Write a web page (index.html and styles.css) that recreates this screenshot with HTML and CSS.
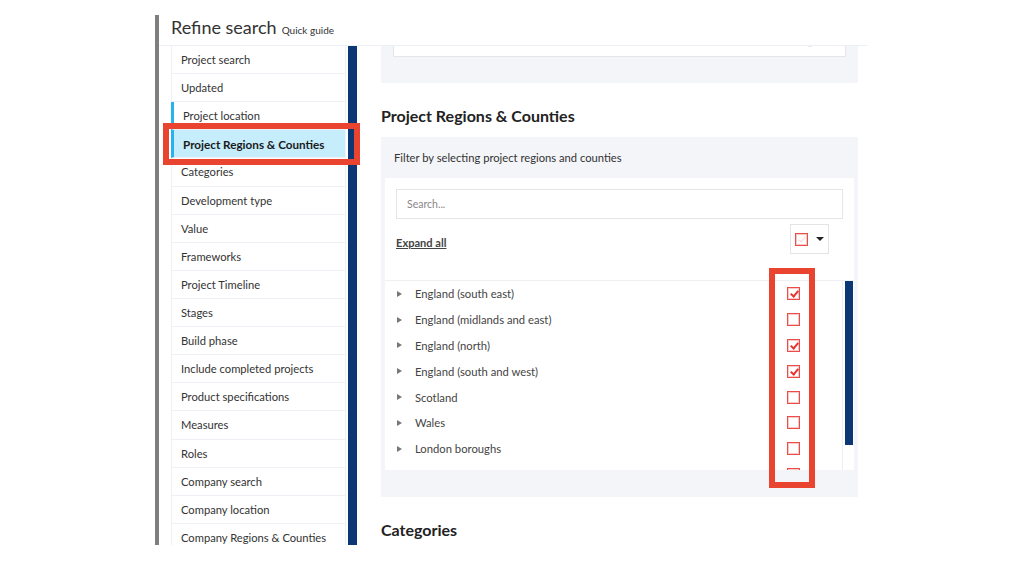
FILE: index.html
```html
<!DOCTYPE html>
<html lang="en">
<head>
<meta charset="UTF-8" />
<meta name="viewport" content="width=device-width, initial-scale=1" />
<title>Refine search</title>
<link rel="stylesheet" href="styles.css">
</head>
<body>

<div class="page">
  <div class="head">
    <h1>Refine search</h1>
    <a class="guide" href="#">Quick guide</a>
  </div>

  <div class="body">
    <div class="side">
      <ul class="nav">
        <li>Project search</li>
        <li>Updated</li>
        <li class="set">Project location</li>
        <li class="set active">Project Regions &amp; Counties</li>
        <li>Categories</li>
        <li>Development type</li>
        <li>Value</li>
        <li>Frameworks</li>
        <li>Project Timeline</li>
        <li>Stages</li>
        <li>Build phase</li>
        <li>Include completed projects</li>
        <li>Product specifications</li>
        <li>Measures</li>
        <li>Roles</li>
        <li>Company search</li>
        <li>Company location</li>
        <li>Company Regions &amp; Counties</li>
      </ul>
      <div class="side-bar"></div>
      <div class="mark mark-nav"></div>
    </div>

    <div class="main">
      <div class="panel panel-loc">
        <div class="loc-input">
          <span class="loc-text">Location</span>
          <span class="loc-icons">
            <svg width="10" height="10" viewBox="0 0 10 10"><circle cx="5" cy="5" r="4" fill="none" stroke="#c8c8c8" stroke-width="1.2"/></svg>
            <svg width="8" height="8" viewBox="0 0 8 8"><path d="M1 3 L4 6 L7 3" fill="none" stroke="#bbb" stroke-width="1.2"/></svg>
          </span>
        </div>
      </div>

      <h2>Project Regions &amp; Counties</h2>
      <div class="panel panel-regions">
        <p class="hint">Filter by selecting project regions and counties</p>
        <div class="picker">
          <div class="search">Search...</div>
          <div class="tools">
            <a class="expand" href="#">Expand all</a>
            <div class="bulk">
              <span class="cb cb-faint"></span>
              <span class="caret"></span>
            </div>
          </div>
          <div class="tree">
            <ul class="regions">
              <li><span class="tri"></span><span class="name">England (south east)</span><span class="cb on"></span></li>
              <li><span class="tri"></span><span class="name">England (midlands and east)</span><span class="cb"></span></li>
              <li><span class="tri"></span><span class="name">England (north)</span><span class="cb on"></span></li>
              <li><span class="tri"></span><span class="name">England (south and west)</span><span class="cb on"></span></li>
              <li><span class="tri"></span><span class="name">Scotland</span><span class="cb"></span></li>
              <li><span class="tri"></span><span class="name">Wales</span><span class="cb"></span></li>
              <li><span class="tri"></span><span class="name">London boroughs</span><span class="cb"></span></li>
              <li><span class="tri"></span><span class="name">Ireland</span><span class="cb"></span></li>
            </ul>
            <div class="scroll"><div class="thumb"></div></div>
          </div>
        </div>
        <div class="mark mark-boxes"></div>
      </div>

      <h2>Categories</h2>
    </div>
  </div>
</div>

</body>
</html>
```

FILE: styles.css
```css
body {
  margin: 0;
  background: #fff;
  font-family: Lato, "Open Sans", sans-serif;
  color: #333;
}

.page {
  margin: 15px 0 0 155px;
  width: 709px;
  height: 530px;
  border-left: 4px solid #7f7f7f;
  display: flex;
  flex-direction: column;
  overflow: hidden;
}

.head {
  height: 31px;
  box-sizing: border-box;
  padding-left: 12px;
  display: flex;
  align-items: baseline;
  gap: 5px;
  border-bottom: 1px solid #edf0f4;
  position: relative;
  z-index: 2;
  background: #fff;
}
.head h1 {
  margin: 0;
  font-size: 18px;
  font-weight: 400;
  line-height: 24px;
  color: #333;
}
.guide {
  font-size: 10px;
  color: #333;
  text-decoration: none;
}

.body {
  flex: 1;
  display: flex;
  min-height: 0;
}

/* sidebar */
.side {
  position: relative;
  display: flex;
  padding-left: 12px;
}
.nav {
  list-style: none;
  margin: 0;
  padding: 0;
  width: 173px;
  border-left: 1px solid #edf1f5;
  border-right: 1px solid #edf1f5;
}
.nav li {
  height: 28.12px;
  box-sizing: border-box;
  padding-left: 9px;
  display: flex;
  align-items: center;
  font-size: 11.2px;
  border-bottom: 1px solid #edf1f5;
  white-space: nowrap;
}
.nav li.set {
  border-left: 3px solid #27b3ee;
  padding-left: 9px;
  margin-left: -1px;
}
.nav li.active {
  background: #c6edfc;
  font-weight: 700;
  font-size: 11.7px;
  color: #1a1a1a;
}
.side-bar {
  width: 9px;
  margin-left: 2px;
  background: #0b3874;
}

.mark {
  position: absolute;
  border: 6px solid #e8442f;
  box-sizing: border-box;
  pointer-events: none;
}
.mark-nav {
  left: 4px;
  top: 77px;
  width: 197px;
  height: 42px;
}

/* main column */
.main {
  flex: 1;
  margin-left: 24px;
  margin-right: 10px;
  min-width: 0;
}
.panel {
  background: #f3f5f9;
}
.panel-loc {
  margin-top: -32px;
  padding: 12px 12px 26px;
}
.loc-input {
  height: 31px;
  box-sizing: border-box;
  background: #fff;
  border: 1px solid #e4e6ea;
  display: flex;
  align-items: center;
  justify-content: space-between;
  padding: 0 10px 0 12px;
  font-size: 11px;
  color: #999;
}
.loc-icons {
  display: flex;
  align-items: center;
  gap: 12px;
}

h2 {
  margin: 23px 0 11px;
  font-size: 16px;
  line-height: 20px;
  font-weight: 700;
  color: #222;
}

.panel-regions {
  position: relative;
  padding: 13px 4px 27px;
}
.hint {
  margin: 0 0 12px 9px;
  font-size: 11.2px;
  line-height: 16px;
  color: #333;
}
.picker {
  background: #fff;
  padding-top: 11px;
}
.search {
  margin: 0 11px;
  height: 30px;
  box-sizing: border-box;
  border: 1px solid #e4e6ea;
  padding: 0 10px;
  display: flex;
  align-items: center;
  font-size: 10.5px;
  color: #888;
}
.tools {
  height: 62px;
  box-sizing: border-box;
  padding: 5px 25px 0 11px;
  display: flex;
  justify-content: space-between;
  align-items: flex-start;
  border-bottom: 1px solid #eef0f3;
}
.expand {
  margin-top: 12px;
  font-size: 11.1px;
  font-weight: 700;
  color: #444;
  text-decoration: underline;
}
.bulk {
  width: 39px;
  height: 30px;
  box-sizing: border-box;
  border: 1px solid #e2e4e8;
  display: flex;
  align-items: center;
  padding-left: 4px;
  gap: 8px;
}
.caret {
  width: 0;
  height: 0;
  border-left: 4px solid transparent;
  border-right: 4px solid transparent;
  border-top: 4px solid #222;
}

.cb {
  width: 13px;
  height: 13px;
  box-sizing: border-box;
  border: 1px solid #ea4d48;
  box-shadow: inset 0 0 0 1px rgba(238, 100, 96, 0.35);
  background: #fff;
  display: inline-block;
  position: relative;
}
.cb.on::after {
  content: "";
  position: absolute;
  left: 4px;
  top: 1px;
  width: 3px;
  height: 6px;
  border-right: 2px solid #e8342f;
  border-bottom: 2px solid #e8342f;
  transform: rotate(40deg);
}
.cb-faint::after {
  content: "";
  position: absolute;
  left: 4px;
  top: 1px;
  width: 3px;
  height: 6px;
  border-right: 1.5px solid #f7d6d6;
  border-bottom: 1.5px solid #f7d6d6;
  transform: rotate(40deg);
}

.tree {
  height: 189px;
  display: flex;
  overflow: hidden;
}
.regions {
  list-style: none;
  margin: 0;
  padding: 0;
  flex: 1;
}
.regions li {
  height: 25.8px;
  display: flex;
  align-items: center;
  font-size: 11.25px;
  color: #444;
  padding-left: 12px;
  padding-right: 42px;
}
.tri {
  width: 0;
  height: 0;
  border-top: 3px solid transparent;
  border-bottom: 3px solid transparent;
  border-left: 5px solid #777;
  margin-right: 13px;
}
.regions .name {
  flex: 1;
}
.scroll {
  width: 12px;
  border-left: 1px solid #eceef1;
  padding-left: 2px;
  box-sizing: border-box;
}
.thumb {
  width: 8px;
  height: 164px;
  background: #0b3874;
}

.mark-boxes {
  left: 388px;
  top: 131px;
  width: 46px;
  height: 220px;
}
```
